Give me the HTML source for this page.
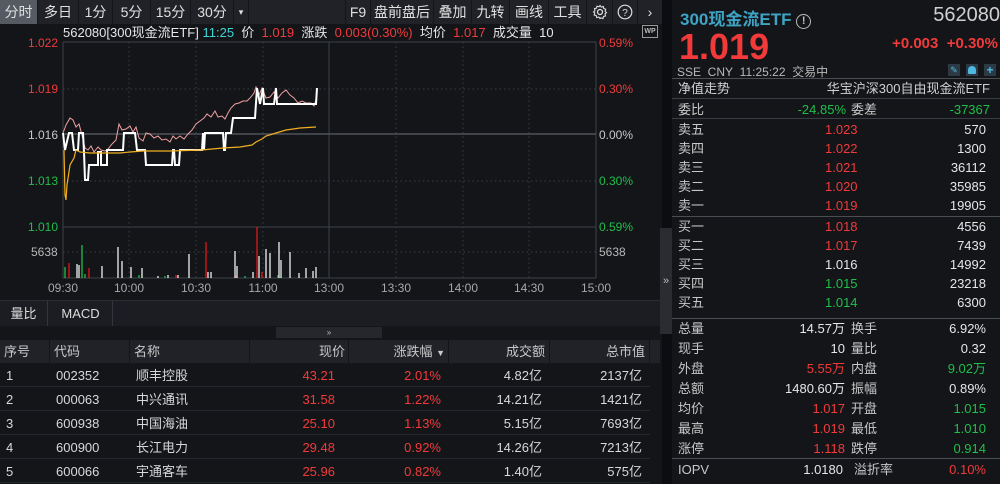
<!DOCTYPE html>
<html><head><meta charset="utf-8"><style>
*{margin:0;padding:0;box-sizing:border-box}
body{width:1000px;height:484px;background:#131519;color:#d6d8dc;font-family:"Liberation Sans","Noto Sans CJK SC",sans-serif;font-size:13px;position:relative;overflow:hidden}
.a{position:absolute;white-space:nowrap}
.r{color:#f23a3a}.g{color:#1fbf4a}.w{color:#e6e6e6}.c{color:#3fd6d6}.l{color:#c8c8c8}
.tb{position:absolute;top:0;height:24px;background:#202227;line-height:24px;text-align:center;font-size:14px;color:#e0e0e0}
.rp div.row{position:absolute;left:678px;width:312px;height:19px;line-height:19px;font-size:13px}
.row span{position:absolute}
.hl{position:absolute;height:1px;background:#3a3d44}
.th{position:absolute;top:340px;height:23px;background:#202228;line-height:23px;font-size:13px;color:#c8c8c8}
.tr{position:absolute;left:0;width:650px;height:23px;line-height:23px;border-bottom:1px solid #23262c;font-size:13px}
.tr span{position:absolute}
</style></head><body>
<!-- toolbar -->
<div class="tb" style="left:0;width:37px;background:#555a63">分时</div>
<div class="tb" style="left:38px;width:40px">多日</div>
<div class="tb" style="left:79px;width:33px">1分</div>
<div class="tb" style="left:113px;width:37px">5分</div>
<div class="tb" style="left:151px;width:39px">15分</div>
<div class="tb" style="left:191px;width:42px">30分</div>
<div class="tb" style="left:234px;width:14px;font-size:9px">▾</div>
<div class="tb" style="left:249px;width:96px"></div>
<div class="tb" style="left:346px;width:24px">F9</div>
<div class="tb" style="left:371px;width:62px">盘前盘后</div>
<div class="tb" style="left:434px;width:37px">叠加</div>
<div class="tb" style="left:472px;width:37px">九转</div>
<div class="tb" style="left:510px;width:38px">画线</div>
<div class="tb" style="left:549px;width:37px">工具</div>
<div class="tb" style="left:587px;width:25px">
<svg width="16" height="16" viewBox="0 0 16 16" style="margin-top:4px"><circle cx="8" cy="8" r="2.5" fill="none" stroke="#ddd" stroke-width="1.3"/><path d="M8 1.5l1.3 1.6 2-.6.4 2 2 .7-.6 2 1.4 1.5-1.5 1.3.5 2-2 .5-.5 2-2-.6L8 14.5 6.7 13l-2 .6-.5-2-2-.6.6-2L1.5 8 3 6.6l-.5-2 2-.4.5-2 2 .6z" fill="none" stroke="#ddd" stroke-width="1.1"/></svg></div>
<div class="tb" style="left:613px;width:24px">
<svg width="16" height="16" viewBox="0 0 16 16" style="margin-top:4px"><circle cx="8" cy="8" r="6.8" fill="none" stroke="#ddd" stroke-width="1.2"/><text x="8" y="12" font-size="10" fill="#ddd" text-anchor="middle" font-family="Liberation Sans">?</text></svg></div>
<div class="tb" style="left:638px;width:24px">›</div>
<div class="a" style="left:662px;top:0;width:10px;height:484px;background:#0c0d10"></div>
<div class="a" style="left:660px;top:228px;width:12px;height:106px;background:#2a2c31;color:#bbb;font-size:11px;line-height:106px;text-align:center">»</div>

<!-- info line -->
<div class="a" style="left:63px;top:24px;line-height:17px;font-size:13px"><span class="w">562080[300现金流ETF]</span> <span class="c">11:25</span>&nbsp; <span class="w">价</span>&nbsp; <span class="r">1.019</span>&nbsp; <span class="w">涨跌</span>&nbsp; <span class="r">0.003(0.30%)</span>&nbsp; <span class="w">均价</span>&nbsp; <span class="r">1.017</span>&nbsp; <span class="w">成交量</span>&nbsp; <span class="w">10</span></div>
<div class="a" style="left:642px;top:25px;width:16px;height:13px;border:1px solid #999;color:#bbb;font-size:7px;line-height:11px;text-align:center;font-weight:bold">WP</div>

<!-- chart svg -->
<svg class="a" style="left:0;top:0" width="660" height="300" viewBox="0 0 660 300">
<g stroke="#3a3d44" stroke-dasharray="1.5,3" stroke-width="1">
<line x1="63" y1="89" x2="596" y2="89"/><line x1="63" y1="181" x2="596" y2="181"/><line x1="63" y1="252" x2="596" y2="252"/>
<line x1="129" y1="42" x2="129" y2="278"/><line x1="196" y1="42" x2="196" y2="278"/><line x1="263" y1="42" x2="263" y2="278"/>
<line x1="396" y1="42" x2="396" y2="278"/><line x1="463" y1="42" x2="463" y2="278"/><line x1="529" y1="42" x2="529" y2="278"/>
</g>
<g stroke="#3e4148" stroke-width="1" fill="none">
<line x1="63" y1="42" x2="596" y2="42"/><line x1="63" y1="227" x2="596" y2="227"/><line x1="63" y1="278" x2="596" y2="278"/>
<line x1="63" y1="42" x2="63" y2="278"/><line x1="596" y1="42" x2="596" y2="278"/><line x1="329" y1="42" x2="329" y2="278"/>
<line x1="63" y1="134" x2="596" y2="134" stroke="#50535a" stroke-width="1.5"/>
</g>
<polyline fill="none" stroke="#f0a0a0" stroke-width="1" points="63,133 66,125 70,118 73,120 76,127 79,124 82,135 85,148 88,150 91,146 94,152 98,147 101,150 105,151 108,149 112,144 116,140 119,124 122,130 126,129 130,126 133,132 136,127 139,138 143,141 146,133 150,134 154,138 158,136 162,140 166,139 170,142 173,136 176,139 180,136 184,139 188,134 192,130 196,124 200,121 204,118 207,114 211,117 215,111 218,117 222,116 225,119 228,113 231,108 235,104 239,103 243,101 247,101 250,98 254,93 256,87 259,95 262,88 266,98 270,97 274,92 278,98 282,93 286,90 290,95 294,98 298,103 302,101 306,103 311,103 314,106 316,100"/>
<polyline fill="none" stroke="#ffffff" stroke-width="2" points="63,133 65,150 69,133 72,133 74,150 78,150 79,133 83,133 84,152 85,180 88,180 89,165 98,165 98,152 101,152 101,165 107,165 107,150 123,150 124,133 135,133 137,150 145,150 146,165 172,165 173,150 174,150 175,165 179,165 180,150 202,150 203,133 204,150 205,133 223,133 224,150 225,150 226,133 231,133 233,118 255,118 257,88 260,104 263,88 264,104 274,104 276,88 277,104 315,104 316,104 317,88"/>
<polyline fill="none" stroke="#f0b020" stroke-width="1.2" points="64,150 65,195 66,200 67,185 70,165 74,158 76,150 80,152 90,153 100,153 120,153 130,152 143,151 170,151 202,150 212,149 223,148 240,147 252,145 256,142 262,139 266,136 276,133 286,130 300,128 316,127"/>
<g stroke-width="1.3">
<g stroke="#1fbf4a"><line x1="65" y1="278" x2="65" y2="267"/><line x1="82" y1="278" x2="82" y2="245"/><line x1="85" y1="278" x2="85" y2="274"/><line x1="139" y1="278" x2="139" y2="275"/><line x1="165" y1="278" x2="165" y2="276"/><line x1="245" y1="278" x2="245" y2="276"/><line x1="278" y1="278" x2="278" y2="275"/></g>
<g stroke="#e01818"><line x1="69" y1="278" x2="69" y2="263"/><line x1="89" y1="278" x2="89" y2="268"/><line x1="206" y1="278" x2="206" y2="242"/><line x1="257" y1="278" x2="257" y2="227"/><line x1="176" y1="278" x2="176" y2="275"/><line x1="262" y1="278" x2="262" y2="272"/><line x1="236" y1="278" x2="236" y2="276"/></g>
<g stroke="#f0f0f0"><line x1="77" y1="278" x2="77" y2="264"/><line x1="79" y1="278" x2="79" y2="265"/><line x1="102" y1="278" x2="102" y2="266"/><line x1="118" y1="278" x2="118" y2="247"/><line x1="122" y1="278" x2="122" y2="261"/><line x1="131" y1="278" x2="131" y2="267"/><line x1="142" y1="278" x2="142" y2="268"/><line x1="189" y1="278" x2="189" y2="254"/><line x1="208" y1="278" x2="208" y2="272"/><line x1="211" y1="278" x2="211" y2="272"/><line x1="235" y1="278" x2="235" y2="251"/><line x1="237" y1="278" x2="237" y2="266"/><line x1="253" y1="278" x2="253" y2="272"/><line x1="259" y1="278" x2="259" y2="256"/><line x1="266" y1="278" x2="266" y2="249"/><line x1="270" y1="278" x2="270" y2="253"/><line x1="279" y1="278" x2="279" y2="242"/><line x1="281" y1="278" x2="281" y2="260"/><line x1="290" y1="278" x2="290" y2="252"/><line x1="306" y1="278" x2="306" y2="268"/><line x1="316" y1="278" x2="316" y2="267"/><line x1="313" y1="278" x2="313" y2="271"/><line x1="299" y1="278" x2="299" y2="273"/><line x1="168" y1="278" x2="168" y2="275"/><line x1="178" y1="278" x2="178" y2="275"/><line x1="158" y1="278" x2="158" y2="276"/></g>
</g>
<g font-family="Liberation Sans" font-size="12">
<text x="28" y="47" fill="#f23a3a">1.022</text><text x="28" y="93" fill="#f23a3a">1.019</text><text x="28" y="139" fill="#c8c8c8">1.016</text><text x="28" y="185" fill="#1fbf4a">1.013</text><text x="28" y="231" fill="#1fbf4a">1.010</text><text x="31" y="256" fill="#b8b8b8">5638</text>
<text x="599" y="47" fill="#f23a3a">0.59%</text><text x="599" y="93" fill="#f23a3a">0.30%</text><text x="599" y="139" fill="#c8c8c8">0.00%</text><text x="599" y="185" fill="#1fbf4a">0.30%</text><text x="599" y="231" fill="#1fbf4a">0.59%</text><text x="599" y="256" fill="#b8b8b8">5638</text>
<g fill="#a8a8a8" text-anchor="middle"><text x="63" y="292">09:30</text><text x="129" y="292">10:00</text><text x="196" y="292">10:30</text><text x="263" y="292">11:00</text><text x="329" y="292">13:00</text><text x="396" y="292">13:30</text><text x="463" y="292">14:00</text><text x="529" y="292">14:30</text><text x="596" y="292">15:00</text></g>
</g>
</svg>

<!-- tabs -->
<div class="hl" style="left:0;top:300px;width:660px;background:#2a2d33"></div>
<div class="a" style="left:0;top:301px;width:660px;height:25px;background:#1b1d22"></div>
<div class="a" style="left:0;top:301px;width:48px;height:25px;line-height:25px;text-align:center;color:#ddd;border-right:1px solid #33363c;font-size:13px">量比</div>
<div class="a" style="left:49px;top:301px;width:64px;height:25px;line-height:25px;text-align:center;color:#ddd;border-right:1px solid #33363c;font-size:13px">MACD</div>
<div class="a" style="left:0;top:327px;width:660px;height:13px;background:#131519"></div>
<div class="a" style="left:276px;top:327px;width:106px;height:11px;background:#25272c;color:#bbb;font-size:8px;text-align:center;line-height:11px">»</div>
<!-- table header -->
<div class="th" style="left:0;width:49px;padding-left:4px">序号</div>
<div class="th" style="left:50px;width:79px;padding-left:4px">代码</div>
<div class="th" style="left:130px;width:119px;padding-left:4px">名称</div>
<div class="th" style="left:250px;width:98px;text-align:right;padding-right:3px">现价</div>
<div class="th" style="left:349px;width:99px;text-align:right;padding-right:3px">涨跌幅 <span style="font-size:9px">▼</span></div>
<div class="th" style="left:449px;width:100px;text-align:right;padding-right:4px">成交额</div>
<div class="th" style="left:550px;width:99px;text-align:right;padding-right:4px">总市值</div>
<div class="th" style="left:650px;width:10px"></div>
<div class="tr" style="top:364px"><span style="left:6px">1</span><span style="left:56px">002352</span><span style="left:136px">顺丰控股</span><span class="r" style="right:315px">43.21</span><span class="r" style="right:209px">2.01%</span><span style="right:108px">4.82亿</span><span style="right:8px">2137亿</span></div>
<div class="tr" style="top:388px"><span style="left:6px">2</span><span style="left:56px">000063</span><span style="left:136px">中兴通讯</span><span class="r" style="right:315px">31.58</span><span class="r" style="right:209px">1.22%</span><span style="right:108px">14.21亿</span><span style="right:8px">1421亿</span></div>
<div class="tr" style="top:412px"><span style="left:6px">3</span><span style="left:56px">600938</span><span style="left:136px">中国海油</span><span class="r" style="right:315px">25.10</span><span class="r" style="right:209px">1.13%</span><span style="right:108px">5.15亿</span><span style="right:8px">7693亿</span></div>
<div class="tr" style="top:436px"><span style="left:6px">4</span><span style="left:56px">600900</span><span style="left:136px">长江电力</span><span class="r" style="right:315px">29.48</span><span class="r" style="right:209px">0.92%</span><span style="right:108px">14.26亿</span><span style="right:8px">7213亿</span></div>
<div class="tr" style="top:460px"><span style="left:6px">5</span><span style="left:56px">600066</span><span style="left:136px">宇通客车</span><span class="r" style="right:315px">25.96</span><span class="r" style="right:209px">0.82%</span><span style="right:108px">1.40亿</span><span style="right:8px">575亿</span></div>

<!-- right panel -->
<div class="rp">
<div class="a" style="left:680px;top:5px;font-size:17px;font-weight:bold;color:#3fa3c4">300现金流ETF <span style="display:inline-block;width:15px;height:15px;border:1.5px solid #bbb;border-radius:50%;font-size:11px;line-height:12px;text-align:center;color:#bbb;vertical-align:1px">!</span></div>
<div class="a" style="right:0;top:4px;font-size:20px;color:#d0d0d0">562080</div>
<div class="a" style="left:679px;top:28px;font-size:36px;font-weight:bold;color:#f23a3a;line-height:38px">1.019</div>
<div class="a" style="right:2px;top:35px;font-size:15px;font-weight:bold;color:#f23a3a">+0.003&nbsp;&nbsp;+0.30%</div>
<div class="a" style="left:677px;top:63px;font-size:12px;color:#b8b8b8">SSE&nbsp; CNY&nbsp; 11:25:22&nbsp; 交易中</div>
<div class="a" style="left:948px;top:64px;width:12px;height:12px;background:#2b3a44;color:#4fb8e0;font-size:9px;text-align:center;line-height:12px">✎</div>
<div class="a" style="left:966px;top:64px;width:12px;height:12px;background:#2b3a44"><div style="margin:2px auto;width:8px;height:8px;background:#4fb8e0;border-radius:4px 4px 1px 1px"></div></div>
<div class="a" style="left:984px;top:64px;width:12px;height:12px;background:#2b3a44;color:#4fb8e0;font-size:12px;text-align:center;line-height:12px;font-weight:bold">+</div>
<div class="hl" style="left:672px;top:78px;width:328px;background:#4a4d54"></div>
<div class="row" style="top:79px;color:#d0d0d0"><span style="left:0">净值走势</span><span style="right:0">华宝沪深300自由现金流ETF</span></div>
<div class="hl" style="left:672px;top:98px;width:328px"></div>
<div class="row" style="top:100px"><span class="l" style="left:0">委比</span><span class="g" style="left:98px;width:70px;text-align:right">-24.85%</span><span class="l" style="left:173px">委差</span><span class="g" style="right:0">-37367</span></div>
<div class="hl" style="left:672px;top:118px;width:328px"></div>
<div class="row" style="top:120px"><span class="l" style="left:0">卖五</span><span class="r" style="left:147px">1.023</span><span class="w" style="right:4px">570</span></div>
<div class="row" style="top:139px"><span class="l" style="left:0">卖四</span><span class="r" style="left:147px">1.022</span><span class="w" style="right:4px">1300</span></div>
<div class="row" style="top:158px"><span class="l" style="left:0">卖三</span><span class="r" style="left:147px">1.021</span><span class="w" style="right:4px">36112</span></div>
<div class="row" style="top:177px"><span class="l" style="left:0">卖二</span><span class="r" style="left:147px">1.020</span><span class="w" style="right:4px">35985</span></div>
<div class="row" style="top:196px"><span class="l" style="left:0">卖一</span><span class="r" style="left:147px">1.019</span><span class="w" style="right:4px">19905</span></div>
<div class="hl" style="left:672px;top:216px;width:328px;background:#4a4d54"></div>
<div class="row" style="top:217px"><span class="l" style="left:0">买一</span><span class="r" style="left:147px">1.018</span><span class="w" style="right:4px">4556</span></div>
<div class="row" style="top:236px"><span class="l" style="left:0">买二</span><span class="r" style="left:147px">1.017</span><span class="w" style="right:4px">7439</span></div>
<div class="row" style="top:255px"><span class="l" style="left:0">买三</span><span class="w" style="left:147px">1.016</span><span class="w" style="right:4px">14992</span></div>
<div class="row" style="top:274px"><span class="l" style="left:0">买四</span><span class="g" style="left:147px">1.015</span><span class="w" style="right:4px">23218</span></div>
<div class="row" style="top:293px"><span class="l" style="left:0">买五</span><span class="g" style="left:147px">1.014</span><span class="w" style="right:4px">6300</span></div>
<div class="hl" style="left:672px;top:318px;width:328px;background:#4a4d54"></div>
<div class="row" style="top:319px"><span class="l" style="left:0">总量</span><span class="w" style="right:145px">14.57万</span><span class="l" style="left:173px">换手</span><span class="w" style="right:4px">6.92%</span></div>
<div class="row" style="top:339px"><span class="l" style="left:0">现手</span><span class="w" style="right:145px">10</span><span class="l" style="left:173px">量比</span><span class="w" style="right:4px">0.32</span></div>
<div class="row" style="top:359px"><span class="l" style="left:0">外盘</span><span class="r" style="right:145px">5.55万</span><span class="l" style="left:173px">内盘</span><span class="g" style="right:4px">9.02万</span></div>
<div class="row" style="top:379px"><span class="l" style="left:0">总额</span><span class="w" style="right:145px">1480.60万</span><span class="l" style="left:173px">振幅</span><span class="w" style="right:4px">0.89%</span></div>
<div class="row" style="top:399px"><span class="l" style="left:0">均价</span><span class="r" style="right:145px">1.017</span><span class="l" style="left:173px">开盘</span><span class="g" style="right:4px">1.015</span></div>
<div class="row" style="top:419px"><span class="l" style="left:0">最高</span><span class="r" style="right:145px">1.019</span><span class="l" style="left:173px">最低</span><span class="g" style="right:4px">1.010</span></div>
<div class="row" style="top:439px"><span class="l" style="left:0">涨停</span><span class="r" style="right:145px">1.118</span><span class="l" style="left:173px">跌停</span><span class="g" style="right:4px">0.914</span></div>
<div class="hl" style="left:672px;top:458px;width:328px;background:#4a4d54"></div>
<div class="row" style="top:460px"><span class="l" style="left:0">IOPV</span><span class="w" style="right:147px">1.0180</span><span class="l" style="left:176px">溢折率</span><span class="r" style="right:4px">0.10%</span></div>
</div>
</body></html>
